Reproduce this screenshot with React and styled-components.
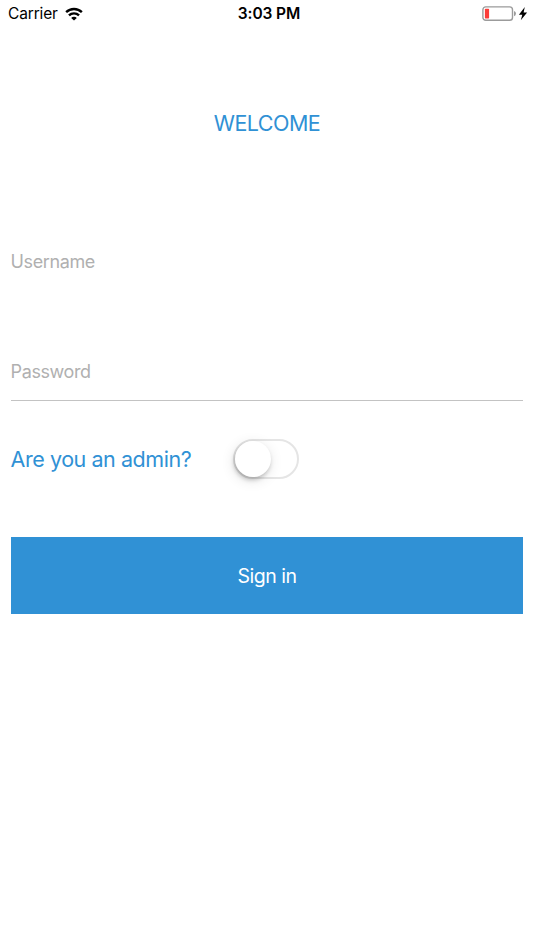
import { useState } from "react";
import styled, { createGlobalStyle } from "styled-components";

const GlobalStyles = createGlobalStyle`
  *,
  *::before,
  *::after {
    box-sizing: border-box;
    margin: 0;
    padding: 0;
  }

  :root {
    --color-primary: #3091d5;
    --color-placeholder: #b0b0b0;
    --color-line: #c3c3c3;
  }

  body {
    background-color: #fff;
    font-family: Inter, "Liberation Sans", sans-serif;
  }
`;

const Screen = styled.div`
  display: flex;
  flex-direction: column;
  height: 950px;
  overflow: hidden;
`;

const StatusBar = styled.header`
  display: grid;
  grid-template-columns: 1fr auto 1fr;
  align-items: center;
  height: 27px;
  padding: 0 5px 0 8px;
  color: #000;
  font-size: 15.5px;
`;

const Carrier = styled.div`
  display: flex;
  align-items: center;
  gap: 7px;
  letter-spacing: -0.15px;
`;

const Time = styled.div`
  margin-left: 1px;
  font-weight: 600;
  letter-spacing: -0.1px;
`;

const Battery = styled.div`
  display: flex;
  align-items: center;
  justify-content: flex-end;
`;

const Form = styled.form`
  display: flex;
  flex-direction: column;
  padding: 0 10.6px;
`;

const Title = styled.h1`
  margin-top: 78px;
  color: var(--color-primary);
  font-size: 21.5px;
  font-weight: 400;
  line-height: 36px;
  letter-spacing: -0.55px;
  text-align: center;
`;

const Input = styled.input`
  width: 100%;
  height: 58px;
  border: none;
  border-bottom: 1px solid ${(props) => (props.$line ? "var(--color-line)" : "transparent")};
  outline: none;
  background: none;
  font-family: inherit;
  font-size: 18px;
  letter-spacing: -0.4px;

  &::placeholder {
    color: var(--color-placeholder);
    opacity: 1;
  }
`;

const Fields = styled.div`
  display: flex;
  flex-direction: column;
  gap: 52px;
  margin-top: 92px;
`;

const AdminRow = styled.div`
  display: flex;
  align-items: center;
  height: 40px;
  margin-top: 38px;
`;

const AdminLabel = styled.label`
  width: 222.4px;
  color: var(--color-primary);
  font-size: 21.5px;
  letter-spacing: -0.45px;
  white-space: nowrap;
`;

const Switch = styled.button`
  width: 66px;
  height: 40px;
  border: 2px solid ${(props) => (props.$on ? "#4cd964" : "#e5e5e5")};
  border-radius: 20px;
  background-color: ${(props) => (props.$on ? "#4cd964" : "#fff")};
  cursor: pointer;
`;

const Thumb = styled.span`
  display: block;
  width: 36px;
  height: 36px;
  margin-left: ${(props) => (props.$on ? "26px" : "0")};
  border-radius: 50%;
  background-color: #fff;
  box-shadow:
    -1px 3px 4px rgba(0, 0, 0, 0.2),
    -1px 3px 14px rgba(0, 0, 0, 0.12);
`;

const SubmitButton = styled.button`
  height: 77px;
  margin-top: 58px;
  border: none;
  background-color: var(--color-primary);
  color: #fff;
  font-family: inherit;
  font-size: 19.5px;
  letter-spacing: -0.5px;
  cursor: pointer;
`;

const WifiIcon = () => (
  <svg width="18" height="14" viewBox="0 0 19 14" fill="none" stroke="#000" strokeWidth="2.5">
    <path d="M1.2 5.1a11.8 11.8 0 0 1 16.6 0" />
    <path d="M4.2 8.5a7.5 7.5 0 0 1 10.6 0" />
    <path d="M9.5 13.9L6.5 11.1a4.2 4.2 0 0 1 6 0Z" fill="#000" stroke="none" />
  </svg>
);

const BatteryIcon = () => (
  <svg width="35" height="16" viewBox="0 0 35 16">
    <rect x="0.9" y="0.9" width="29.6" height="13.4" rx="2.8" fill="none" stroke="#9b9b9b" strokeWidth="1.4" />
    <rect x="2.9" y="2.8" width="4.2" height="9.6" rx="0.7" fill="#fc3d39" />
    <path d="M32 5a2.7 2.7 0 0 1 0 5.2Z" fill="#9b9b9b" />
  </svg>
);

const BoltIcon = () => (
  <svg width="12" height="16" viewBox="0 0 12 16">
    <path d="M7.8 0.9L1.9 8.7H5.3L3.8 14.3L10.1 6.5H6.6Z" fill="#000" />
  </svg>
);

const App = () => {
  const [isAdmin, setIsAdmin] = useState(false);

  return (
    <>
      <GlobalStyles />
      <Screen>
        <StatusBar>
          <Carrier>
            Carrier
            <WifiIcon />
          </Carrier>
          <Time>3:03 PM</Time>
          <Battery>
            <BatteryIcon />
            <BoltIcon />
          </Battery>
        </StatusBar>
        <Form onSubmit={(e) => e.preventDefault()}>
          <Title>WELCOME</Title>
          <Fields>
            <Input type="text" placeholder="Username" />
            <Input type="password" placeholder="Password" $line />
          </Fields>
          <AdminRow>
            <AdminLabel htmlFor="admin">Are you an admin?</AdminLabel>
            <Switch
              id="admin"
              type="button"
              role="switch"
              aria-checked={isAdmin}
              $on={isAdmin}
              onClick={() => setIsAdmin((on) => !on)}
            >
              <Thumb $on={isAdmin} />
            </Switch>
          </AdminRow>
          <SubmitButton>Sign in</SubmitButton>
        </Form>
      </Screen>
    </>
  );
};

export default App;
